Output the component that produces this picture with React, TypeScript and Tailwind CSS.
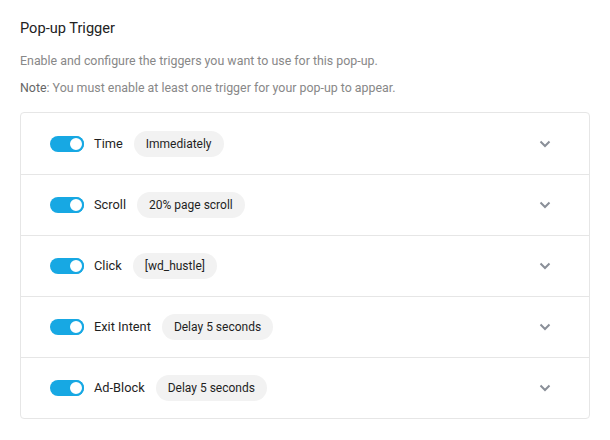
const TRIGGERS = [
  { label: 'Time', value: 'Immediately' },
  { label: 'Scroll', value: '20% page scroll' },
  { label: 'Click', value: '[wd_hustle]' },
  { label: 'Exit Intent', value: 'Delay 5 seconds' },
  { label: 'Ad-Block', value: 'Delay 5 seconds' },
];

function Toggle() {
  return (
    <span className="relative inline-flex h-4 w-[34px] flex-none items-center rounded-full bg-[#17a8e3]">
      <span className="absolute right-0 top-0 size-4 rounded-full border-2 border-[#17a8e3] bg-white" />
    </span>
  );
}

function Chevron() {
  return (
    <svg width="12" height="8" viewBox="0 0 12 8" fill="none" className="text-[#8a8f98]">
      <path d="M1.5 1.5 6 6l4.5-4.5" stroke="currentColor" strokeWidth="2" />
    </svg>
  );
}

export default function App() {
  return (
    <div className="min-h-[440px] w-[610px] bg-white px-5 pt-[18px] font-['Roboto',sans-serif]">
      <h2 className="text-[14.6px] font-normal leading-5 text-[#222]">Pop-up Trigger</h2>
      <p className="mt-[14px] text-[12.4px] leading-[18px] text-[#888]">
        Enable and configure the triggers you want to use for this pop-up.
      </p>
      <p className="mt-[9px] text-[12.4px] leading-[18px] text-[#888]">
        <span className="text-[#666]">Note</span>: You must enable at least one trigger for your pop-up to appear.
      </p>

      <div className="mt-[15px] overflow-hidden rounded-[4px] border border-[#e6e6e6]">
        {TRIGGERS.map((t, i) => (
          <div
            key={t.label}
            className={`flex h-[61px] items-center pl-[29px] pr-[38px] ${i > 0 ? 'border-t border-[#e6e6e6]' : ''}`}
          >
            <Toggle />
            <span className="ml-[10px] text-[12.8px] text-[#1f1f1f]">{t.label}</span>
            <span className="ml-[11px] rounded-full bg-[#f2f2f2] px-3 py-[5px] text-[12px] leading-4 text-[#1f1f1f]">
              {t.value}
            </span>
            <span className="ml-auto">
              <Chevron />
            </span>
          </div>
        ))}
      </div>
    </div>
  );
}
